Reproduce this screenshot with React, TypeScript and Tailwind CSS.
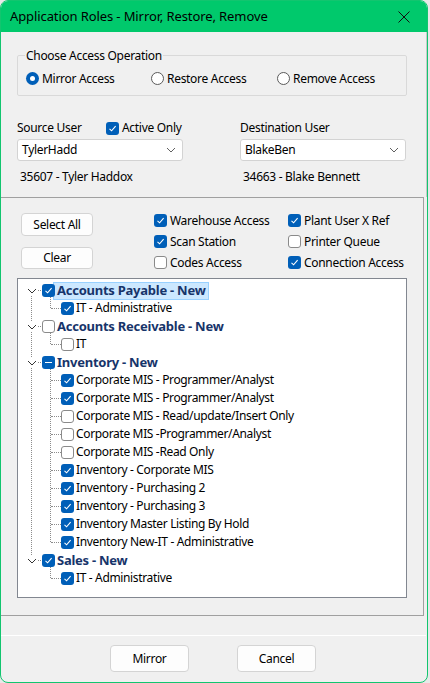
import React from "react";

const FONT = { fontFamily: '"Noto Sans", "Open Sans", Arial, sans-serif' };

function Check({ state }: { state: "on" | "off" | "mixed" }) {
  if (state === "off") {
    return <span className="relative z-10 inline-block h-[13px] w-[13px] shrink-0 rounded-[3px] border border-[#8a8a8a] bg-white" />;
  }
  return (
    <span className="relative z-10 flex h-[13px] w-[13px] shrink-0 items-center justify-center rounded-[3px] bg-[#005fb8]">
      {state === "on" ? (
        <svg width="9" height="9" viewBox="0 0 9 9">
          <path d="M1.5 4.8 L3.6 6.8 L7.6 2.2" fill="none" stroke="white" strokeWidth="1.1" />
        </svg>
      ) : (
        <span className="h-[1.5px] w-[7px] bg-white" />
      )}
    </span>
  );
}

function Radio({ on }: { on?: boolean }) {
  return on ? (
    <span className="flex h-[13px] w-[13px] shrink-0 items-center justify-center rounded-full bg-[#005fb8]">
      <span className="h-[5px] w-[5px] rounded-full bg-white" />
    </span>
  ) : (
    <span className="h-[13px] w-[13px] shrink-0 rounded-full border border-[#5a5a5a] bg-white" />
  );
}

function Chevron({ dark }: { dark?: boolean }) {
  return (
    <svg width="10" height="6" viewBox="0 0 10 6">
      <path d="M1 1 L5 5 L9 1" fill="none" stroke={dark ? "#333" : "#606060"} strokeWidth="1" />
    </svg>
  );
}

function Dropdown({ value }: { value: string }) {
  return (
    <div className="flex h-[22px] w-[166px] items-center justify-between rounded-[3px] border border-[#d3d3d3] bg-white pl-[4px] pr-[6px] text-[12px] text-black">
      <span>{value}</span>
      <Chevron />
    </div>
  );
}

function Btn({ label, h }: { label: string; h: string }) {
  return (
    <div className={`flex w-[72px] ${h} items-center justify-center rounded-[4px] border border-[#d4d4d4] bg-[#fdfdfd] text-[12px] text-black`}>
      {label}
    </div>
  );
}

type Group = { name: string; state: "on" | "off" | "mixed"; selected?: boolean; items: [string, boolean][] };

const groups: Group[] = [
  { name: "Accounts Payable - New", state: "on", selected: true, items: [["IT - Administrative", true]] },
  { name: "Accounts Receivable - New", state: "off", items: [["IT", false]] },
  {
    name: "Inventory - New",
    state: "mixed",
    items: [
      ["Corporate MIS - Programmer/Analyst", true],
      ["Corporate MIS - Programmer/Analyst", true],
      ["Corporate MIS - Read/update/Insert Only", false],
      ["Corporate MIS -Programmer/Analyst", false],
      ["Corporate MIS -Read Only", false],
      ["Inventory - Corporate MIS", true],
      ["Inventory - Purchasing 2", true],
      ["Inventory - Purchasing 3", true],
      ["Inventory Master Listing By Hold", true],
      ["Inventory New-IT - Administrative", true],
    ],
  },
  { name: "Sales - New", state: "on", items: [["IT - Administrative", true]] },
];

function TreeGroup({ g, last }: { g: Group; last: boolean }) {
  return (
    <div className="relative">
      {!last && <span className="absolute left-[13px] top-[10px] bottom-[-10px] border-l border-dotted border-[#8c8c8c]" />}
      <div className="relative flex h-[18px] items-start pt-[1px]">
        <div className="flex h-[17px] items-center">
          <span className="relative z-10 ml-[8px] flex h-[9px] w-[11px] items-center justify-center bg-white">
            <Chevron dark />
          </span>
          <span className="ml-[1px] w-[3px] border-t border-dotted border-[#8c8c8c]" />
          <span className="ml-[1px]"><Check state={g.state} /></span>
          <span
            className={`ml-[-2px] flex h-[18px] items-center border pl-[3px] pr-[2px] text-[13px] font-bold tracking-[-0.25px] text-[#17346a] ${
              g.selected ? "border-[#99d1ff] bg-[#cce8ff]" : "border-transparent"
            }`}
          >
            {g.name}
          </span>
        </div>
      </div>
      <div className="relative">
        <span className="absolute left-[32px] top-[-3px] bottom-[9px] border-l border-dotted border-[#8c8c8c]" />
        {g.items.map(([label, on], i) => (
          <div key={i} className="flex h-[18px] items-center">
            <span className="ml-[33px] w-[10px] border-t border-dotted border-[#8c8c8c]" />
            <Check state={on ? "on" : "off"} />
            <span className="ml-[2px] text-[12px] tracking-[-0.35px] text-black">{label}</span>
          </div>
        ))}
      </div>
    </div>
  );
}

export default function App() {
  return (
    <div className="h-[683px] w-[430px] bg-[#e8e8e8]" style={FONT}>
      <div className="flex h-[683px] w-[428px] flex-col overflow-hidden rounded-lg border border-[#12c56f] bg-[#f0f0f0] tracking-[-0.3px]">
        {/* Title bar */}
        <div className="flex h-[31px] shrink-0 items-center justify-between bg-[#00c96c] pl-[9px] pr-[17px]">
          <span className="text-[13px] tracking-[-0.1px] text-black">Application Roles - Mirror, Restore, Remove</span>
          <svg width="12" height="12" viewBox="0 0 12 12">
            <path d="M0.5 0.5 L11.5 11.5 M11.5 0.5 L0.5 11.5" stroke="#111" strokeWidth="1" />
          </svg>
        </div>

        {/* Top panel */}
        <div className="h-[165px] shrink-0 border-r border-[#c8c8c8]">
          <div className="relative ml-[16px] mt-[23px] h-[41px] w-[390px] rounded-[2px] border border-[#d9d9d9]">
            <span className="absolute left-[7px] top-[-8px] bg-[#f0f0f0] px-[1px] text-[12px] leading-[16px] text-black">
              Choose Access Operation
            </span>
            <div className="flex h-full items-center pl-[8px] pt-[6px] text-[12px] text-black">
              <div className="flex w-[125px] items-center gap-[3px]"><Radio on /> Mirror Access</div>
              <div className="flex w-[126px] items-center gap-[3px]"><Radio /> Restore Access</div>
              <div className="flex items-center gap-[3px]"><Radio /> Remove Access</div>
            </div>
          </div>

          <div className="ml-[16px] mt-[24px] flex gap-[57px] text-[12px] text-black">
            <div className="w-[166px]">
              <div className="flex h-[16px] items-center">
                <span className="w-[89px]">Source User</span>
                <span className="flex items-center gap-[3px]">
                  <Check state="on" /> Active Only
                </span>
              </div>
              <div className="mt-[3px]"><Dropdown value="TylerHadd" /></div>
              <div className="mt-[8px] pl-[3px] leading-[16px]">35607 - Tyler Haddox</div>
            </div>
            <div className="w-[166px]">
              <div className="flex h-[16px] items-center">Destination User</div>
              <div className="mt-[3px]"><Dropdown value="BlakeBen" /></div>
              <div className="mt-[8px] pl-[3px] leading-[16px]">34663 - Blake Bennett</div>
            </div>
          </div>
        </div>

        {/* Middle panel */}
        <div className="h-[419px] w-[423px] shrink-0 border-y border-r border-[#a0a0a0]">
          <div className="flex h-[73px]">
            <div className="ml-[20px] mt-[15px] flex flex-col gap-[11px]">
              <Btn label="Select All" h="h-[23px]" />
              <Btn label="Clear" h="h-[22px]" />
            </div>
            <div className="ml-[61px] mt-[12px] grid h-[63px] grid-cols-[134px_auto] text-[12px] text-black">
              {[
                ["Warehouse Access", true],
                ["Plant User X Ref", true],
                ["Scan Station", true],
                ["Printer Queue", false],
                ["Codes Access", false],
                ["Connection Access", true],
              ].map(([label, on]) => (
                <div key={label as string} className="flex h-[21px] items-center gap-[3px]">
                  <Check state={on ? "on" : "off"} />
                  {label}
                </div>
              ))}
            </div>
          </div>

          <div className="ml-[16px] mt-[7px] h-[320px] w-[390px] border border-[#828790] bg-white pt-[2px]">
            {groups.map((g, i) => (
              <TreeGroup key={g.name} g={g} last={i === groups.length - 1} />
            ))}
          </div>
        </div>

        {/* Footer */}
        <div className="mt-[19px] h-[1px] w-[425px] shrink-0 bg-white" />
        <div className="flex justify-center gap-[48px] pt-[9px] pr-[2px]">
          <div className="flex h-[27px] w-[79px] items-center justify-center rounded-[4px] border border-[#d4d4d4] bg-[#fdfdfd] text-[12px] text-black">Mirror</div>
          <div className="flex h-[27px] w-[79px] items-center justify-center rounded-[4px] border border-[#d4d4d4] bg-[#fdfdfd] text-[12px] text-black">Cancel</div>
        </div>
      </div>
    </div>
  );
}
